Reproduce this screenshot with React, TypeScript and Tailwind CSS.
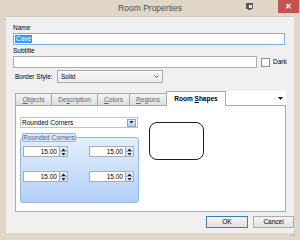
import React from "react";

const font = 'font-["Liberation_Sans",Arial,sans-serif]';

function Arrow({ up }: { up?: boolean }) {
  return (
    <svg width="5" height="3" viewBox="0 0 5 3">
      <path d={up ? "M0.5 3 L2.5 0.5 L4.5 3 Z" : "M0.5 0 L4.5 0 L2.5 2.5 Z"} fill="#1a1a1a" />
    </svg>
  );
}

function Spin() {
  return (
    <div className="flex h-[11px] w-[45px]">
      <div className="flex-1 border border-[#abadb3] bg-white pr-[2px] text-right text-[6.5px] leading-[9px] text-black">
        15.00
      </div>
      <div className="flex w-[8px] flex-col border border-l-0 border-[#9fb3cf]">
        <div className="flex flex-1 items-center justify-center border-b border-[#9fb3cf] bg-gradient-to-b from-[#eef3fa] to-[#cddcef]">
          <Arrow up />
        </div>
        <div className="flex flex-1 items-center justify-center bg-gradient-to-b from-[#eef3fa] to-[#cddcef]">
          <Arrow />
        </div>
      </div>
    </div>
  );
}

function Tab({ label, u, w }: { label: string; u: number; w: string }) {
  return (
    <div
      className={`${w} -mr-px flex h-[12px] items-center justify-center border border-b-0 border-[#a9a9a9] bg-gradient-to-b from-[#f5f5f5] to-[#dedede] text-[6.5px] leading-[8px] text-[#666]`}
    >
      <span>
        {label.slice(0, u)}
        <span className="underline">{label[u]}</span>
        {label.slice(u + 1)}
      </span>
    </div>
  );
}

export default function App() {
  return (
    <div className={`${font} relative flex h-[240px] w-[300px] flex-col bg-[#e0d7c9]`}>
      {/* title bar */}
      <div className="flex h-[16px] items-start">
        <div className="flex-1" />
        <div className="text-[8.5px] leading-[16px] text-[#4f4f4f]">Room Properties</div>
        <div className="flex flex-1 items-start justify-end">
          <svg width="7" height="7" viewBox="0 0 7 7" className="mr-[25px] mt-[3px]">
            <rect x="0" y="0" width="7" height="6" fill="#5a5a5a" />
            <rect x="3" y="2" width="3" height="3" fill="#e8e8e8" />
            <rect x="2" y="6" width="3" height="1" fill="#5a5a5a" />
          </svg>
          <div className="mr-px flex h-[13px] w-[21px] items-center justify-center bg-[#c75050] text-[8px] font-bold leading-none text-white">
            ✕
          </div>
        </div>
      </div>

      {/* client */}
      <div className="mx-[6px] flex h-[217px] flex-col border-t border-[#d2c9bb] bg-[#f0f0f0] pl-[7px] text-[6.5px] text-black">
        <div className="mt-[7px] leading-[8px]">Name</div>
        <div className="mt-px flex h-[12px] w-[272px] items-center border border-[#7eaee6] bg-white pl-px">
          <span className="bg-[#3399ff] px-px leading-[8px] text-white">Cave</span>
        </div>

        <div className="mt-[2px] leading-[8px]">Subtitle</div>
        <div className="mt-px flex items-center">
          <div className="h-[12px] w-[244px] border border-[#abadb3] bg-white" />
          <div className="ml-[4px] h-[9px] w-[9px] border border-[#8f8f8f] bg-white" />
          <span className="ml-[3px] leading-[8px]">Dark</span>
        </div>

        <div className="mt-[2px] flex items-center">
          <span className="ml-[2px] w-[42px] leading-[8px]">Border Style:</span>
          <div className="flex h-[13px] w-[106px] items-center justify-between border border-[#acacac] bg-gradient-to-b from-[#f9f9f9] to-[#ececec] pl-[3px] pr-[3px]">
            <span className="leading-[8px]">Solid</span>
            <svg width="5" height="3" viewBox="0 0 5 3">
              <path d="M0.5 0.5 L2.5 2.5 L4.5 0.5" fill="none" stroke="#444" strokeWidth="0.9" />
            </svg>
          </div>
        </div>

        {/* tabs */}
        <div className="ml-[2px] mt-[8px] flex w-[271px] flex-col">
          <div className="flex h-[14px] items-end">
            <Tab label="Objects" u={0} w="w-[37px]" />
            <Tab label="Description" u={2} w="w-[47px]" />
            <Tab label="Colors" u={0} w="w-[33px]" />
            <Tab label="Regions" u={0} w="w-[38px]" />
            <div className="relative z-10 -mb-px -mr-px flex h-[15px] w-[60px] items-center justify-center border border-b-0 border-[#a9a9a9] bg-white pb-px text-[6.5px] font-bold leading-[8px]">
              <span>
                Room <span className="underline">S</span>hapes
              </span>
            </div>
            <div className="flex h-[14px] flex-1 items-center justify-end bg-white pr-[3px]">
              <svg width="5" height="3" viewBox="0 0 5 3">
                <path d="M0 0 L5 0 L2.5 3 Z" fill="#111" />
              </svg>
            </div>
          </div>

          <div className="flex h-[107px] border border-[#a9a9a9] bg-white pl-[4px]">
            <div className="flex w-[119px] flex-col">
              <div className="mt-[11px] flex h-[11px] w-[118px] items-center justify-between border border-[#b6c6dd] bg-white pl-[1px] pr-px">
                <span className="leading-[8px]">Rounded Corners</span>
                <div className="flex h-[8px] w-[9px] items-center justify-center border border-[#7ea3d6] bg-gradient-to-b from-[#dfeafa] to-[#b6cff0]">
                  <Arrow />
                </div>
              </div>

              <div className="mt-[5px] flex flex-col">
                <div className="relative z-10 ml-[2px] flex h-[9px] w-[54px] items-center justify-center rounded-[2px] border border-[#8fb4e3] bg-[#dce9fa] leading-[8px] text-[#3f5f8c]">
                  Rounded Corners
                </div>
                <div className="-mt-[5px] flex h-[66px] w-[119px] flex-col gap-[14px] rounded-[3px] border border-[#95b9e6] bg-gradient-to-b from-[#e4effc] to-[#b3d0f8] pl-[2px] pt-[8px]">
                  <div className="flex gap-[21px]">
                    <Spin />
                    <Spin />
                  </div>
                  <div className="flex gap-[21px]">
                    <Spin />
                    <Spin />
                  </div>
                </div>
              </div>
            </div>

            <div className="ml-[10px] mt-[16px] h-[38px] w-[55px] rounded-[8px] border-[1.5px] border-[#1e1e1e]" />
          </div>
        </div>

        <div className="mt-[4px] flex w-[281px] justify-end gap-[5px]">
          <div className="flex h-[12px] w-[42px] items-center justify-center border border-[#3c7fb1] bg-gradient-to-b from-[#f4f4f4] to-[#e2e2e2] leading-[8px]">
            OK
          </div>
          <div className="flex h-[12px] w-[41px] items-center justify-center border border-[#acacac] bg-gradient-to-b from-[#f4f4f4] to-[#e2e2e2] leading-[8px]">
            Cancel
          </div>
        </div>
      </div>

      {/* resize grip */}
      <svg width="6" height="6" viewBox="0 0 6 6" className="absolute bottom-[3px] right-[4px]">
        <rect x="4" y="0" width="1" height="1" fill="#a89f92" />
        <rect x="2" y="2" width="1" height="1" fill="#a89f92" />
        <rect x="4" y="2" width="1" height="1" fill="#a89f92" />
        <rect x="0" y="4" width="1" height="1" fill="#a89f92" />
        <rect x="2" y="4" width="1" height="1" fill="#a89f92" />
        <rect x="4" y="4" width="1" height="1" fill="#a89f92" />
      </svg>
    </div>
  );
}
